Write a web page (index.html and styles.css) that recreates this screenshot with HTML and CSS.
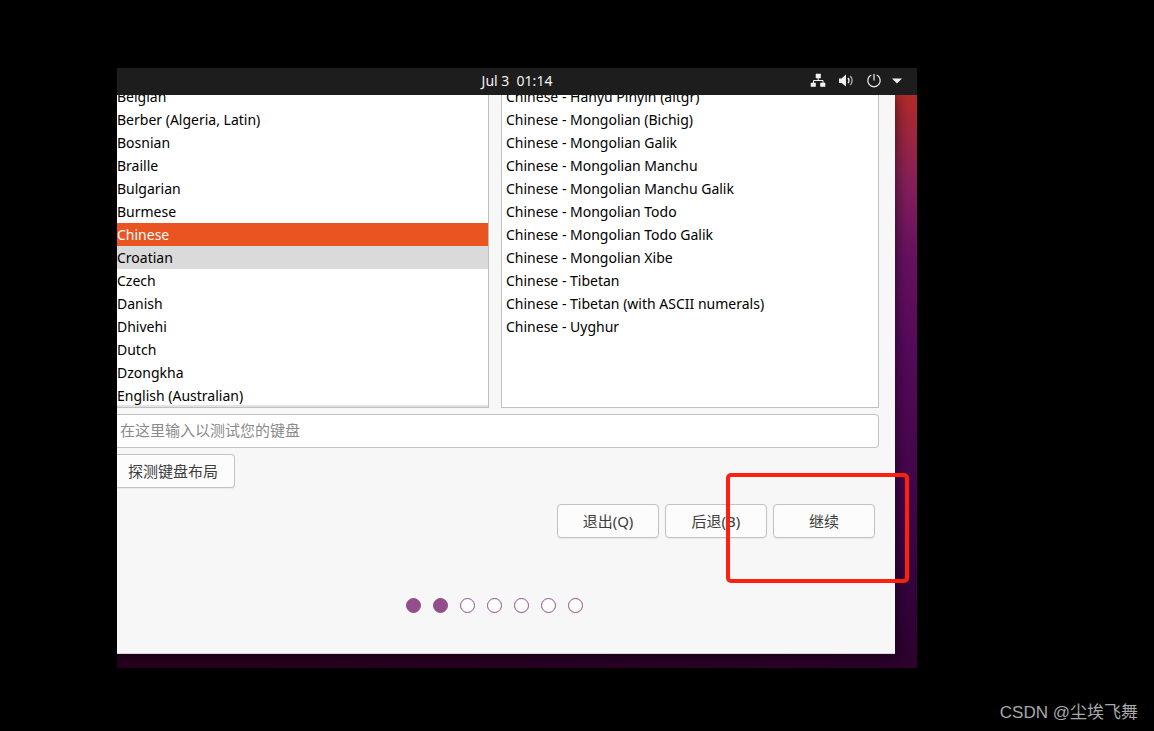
FILE: index.html
```html
<!DOCTYPE html>
<html lang="zh-CN">
<head>
<meta charset="utf-8">
<title>键盘布局</title>
<link rel="stylesheet" href="styles.css">
</head>
<body>
<main class="desktop">
  <header class="topbar">
    <time class="clock">Jul 3&nbsp; 01:14</time>
    <div class="tray">
      <svg class="icon" viewBox="0 0 16 16" aria-hidden="true"><path d="M6 1h4.500v4H6zM1 10h4.500v3.500H1zM10.500 10H15v3.500h-4.500z" fill="#f2f2f2" stroke="#f2f2f2" stroke-width=".6" stroke-linejoin="round"/><path d="M8.250 5v2.500M3.500 10V7.500H13V10" fill="none" stroke="#f2f2f2"/></svg>
      <svg class="icon" viewBox="0 0 16 16" aria-hidden="true"><path d="M1 5.500h2.500L8 1.500v12L3.500 10H1z" fill="#f2f2f2"/><path d="M10 5q2 2.500 0 5" fill="none" stroke="#f2f2f2" stroke-width="1.400"/><path d="M12.300 3q3.600 4.500 0 9" fill="none" stroke="#b0b0b0" stroke-width="1.300"/></svg>
      <svg class="icon" viewBox="0 0 16 16" aria-hidden="true"><path d="M5.300 2a6.200 6.200 0 1 0 5.400 0M8 1v6.500" fill="none" stroke="#f2f2f2" stroke-width="1.200"/></svg>
      <svg class="icon caret" viewBox="0 0 10 6" aria-hidden="true"><path d="M0 .5h10L5 5.500z" fill="#f2f2f2"/></svg>
    </div>
  </header>
  <section class="installer">
    <div class="lists">
      <ul class="list languages" role="listbox" aria-label="Layout">
        <li>Belgian</li>
        <li>Berber (Algeria, Latin)</li>
        <li>Bosnian</li>
        <li>Braille</li>
        <li>Bulgarian</li>
        <li>Burmese</li>
        <li class="selected">Chinese</li>
        <li class="hovered">Croatian</li>
        <li>Czech</li>
        <li>Danish</li>
        <li>Dhivehi</li>
        <li>Dutch</li>
        <li>Dzongkha</li>
        <li>English (Australian)</li>
      </ul>
      <ul class="list variants" role="listbox" aria-label="Variant">
        <li>Chinese - Hanyu Pinyin (altgr)</li>
        <li>Chinese - Mongolian (Bichig)</li>
        <li>Chinese - Mongolian Galik</li>
        <li>Chinese - Mongolian Manchu</li>
        <li>Chinese - Mongolian Manchu Galik</li>
        <li>Chinese - Mongolian Todo</li>
        <li>Chinese - Mongolian Todo Galik</li>
        <li>Chinese - Mongolian Xibe</li>
        <li>Chinese - Tibetan</li>
        <li>Chinese - Tibetan (with ASCII numerals)</li>
        <li>Chinese - Uyghur</li>
      </ul>
    </div>
    <input class="entry" type="text" aria-label="测试键盘" placeholder="在这里输入以测试您的键盘">
    <button class="button detect" type="button">探测键盘布局</button>
    <div class="actions">
      <button class="button" type="button">退出(Q)</button>
      <button class="button" type="button">后退(B)</button>
      <div class="next">
        <button class="button" type="button">继续</button>
        <span class="highlight"></span>
      </div>
    </div>
    <div class="steps">
      <span class="dot done"></span><span class="dot done"></span><span class="dot"></span><span class="dot"></span><span class="dot"></span><span class="dot"></span><span class="dot"></span>
    </div>
  </section>
</main>
<footer class="credit">CSDN @尘埃飞舞</footer>
</body>
</html>
```
FILE: styles.css
```css
* { box-sizing: border-box; }
body {
  margin: 0;
  padding: 68px 16px 0 117px;
  background: #000;
  color: #000;
  font: 14px/23px "Noto Sans", "Noto Sans CJK SC", sans-serif;
}
.desktop {
  margin-right: 221px;
  padding: 0 22px 14px 0;
  background: linear-gradient(185deg, #b02a2c 5%, #86205a 17%, #681161 28%, #560a5c 42%, #46064d 60%, #33033b 80%, #28001f 98%);
}
.topbar {
  display: grid;
  grid-template-columns: 1fr auto 1fr;
  align-items: center;
  height: 27px;
  margin-right: -22px;
  padding: 0 15px 2px;
  background: #1d1d1d;
  color: #f2f2f2;
}
.clock { grid-column: 2; }
.tray {
  display: flex;
  justify-content: flex-end;
  align-items: center;
  gap: 12px;
}
.icon { width: 16px; height: 16px; }
.caret { width: 10px; height: 6px; margin-left: -2px; }
.installer {
  background: #f7f7f7;
  border-bottom: 1px solid #dcd6dc;
  box-shadow: 0 2px 14px rgba(0, 0, 0, .65);
  padding-bottom: 40px;
  clip-path: inset(0 -22px -14px 0);
}
.lists {
  display: grid;
  grid-template-columns: 372fr 378fr;
  gap: 12px;
  padding-right: 16px;
}
.list {
  margin: 0;
  padding: 0;
  list-style: none;
  overflow: hidden;
  background: #fff;
  border: solid #c0c0c0;
  border-width: 0 1px 1px 0;
}
.list li { height: 23px; white-space: nowrap; }
.list li:first-child { margin-top: -10px; }
.languages { box-shadow: inset 0 -2px #e2e2e2; }
.variants { border-left-width: 1px; }
.variants li { padding-left: 4px; }
.list .selected { background: #e95420; color: #fff; }
.list .hovered { background: #dadada; }
.entry {
  display: block;
  width: calc(100% - 16px);
  height: 34px;
  margin: 6px 0;
  padding: 0 3px 2px;
  border: 1px solid #c3c3c3;
  border-left: 0;
  border-radius: 0 4px 4px 0;
  background: #fff;
  font: inherit;
  font-size: 15px;
}
.entry::placeholder { color: #8b8b8b; }
.button {
  width: 102px;
  height: 34px;
  padding: 0;
  border: 1px solid #c3c3c3;
  border-radius: 4px;
  background: #fcfcfc;
  box-shadow: 0 1px 1px rgba(0, 0, 0, .06);
  color: #3d3d3d;
  font: inherit;
  font-size: 15px;
}
.detect {
  display: block;
  width: auto;
  padding: 0 16px 0 11px;
  border-left: 0;
  border-radius: 0 4px 4px 0;
}
.actions {
  display: flex;
  justify-content: flex-end;
  gap: 6px;
  padding: 16px 20px 60px 0;
}
.next { position: relative; display: flex; }
.highlight {
  position: absolute;
  inset: -31px -34px -45px -47px;
  border: 4px solid #ff2010;
  border-radius: 5px;
  pointer-events: none;
}
.steps {
  display: flex;
  justify-content: center;
  gap: 12px;
  padding-right: 23px;
}
.dot {
  width: 15px;
  height: 15px;
  border: 1px solid #924d8b;
  border-radius: 50%;
  background: #fff;
}
.done { background: #924d8b; }
.credit {
  padding-top: 33px;
  color: #a8a8a8;
  font: 17px/24px "Liberation Sans", "Noto Sans CJK SC", sans-serif;
  text-align: right;
}
```
